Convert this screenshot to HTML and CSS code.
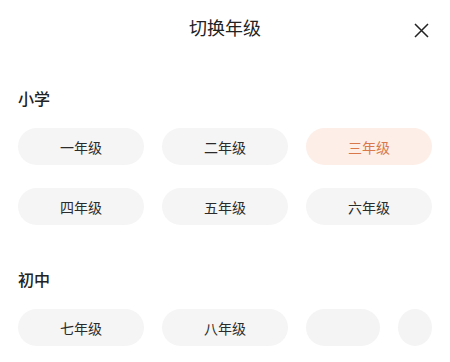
FILE: index.html
```html
<!DOCTYPE html>
<html>
<head>
<meta name="viewport" content="width=device-width, initial-scale=1">
<link rel="stylesheet" href="styles.css">
</head>
<body>

<div class="header">
  <h2 class="title">切换年级</h2>
  <span class="close">
    <svg width="15" height="15" viewBox="0 0 15 15"><path d="M1 1L14 14M14 1L1 14" stroke="#222" stroke-width="1.5" fill="none"/></svg>
  </span>
</div>

<div class="section">
  <div class="section-title first">小学</div>
  <div class="grid">
    <div class="pill">一年级</div>
    <div class="pill">二年级</div>
    <div class="pill active">三年级</div>
    <div class="pill">四年级</div>
    <div class="pill">五年级</div>
    <div class="pill">六年级</div>
  </div>
</div>

<div class="section">
  <div class="section-title">初中</div>
  <div class="grid">
    <div class="pill">七年级</div>
    <div class="pill">八年级</div>
    <div class="placeholder-cell">
      <div class="pill blank"></div>
      <div class="dot"></div>
    </div>
  </div>
</div>

</body>
</html>
```

FILE: styles.css
```css
* {
  box-sizing: border-box;
}

body {
  margin: 0;
  background: #fff;
  font-family: "Noto Sans CJK SC", "Noto Sans", sans-serif;
  color: #222;
}

.header {
  height: 54px;
  display: flex;
  align-items: center;
  justify-content: center;
  position: relative;
}

.title {
  margin: 0;
  font-size: 18px;
  font-weight: 400;
  line-height: 24px;
}

.close {
  position: absolute;
  right: 21px;
  top: 19px;
  width: 15px;
  height: 15px;
}

.section {
  padding: 0 18px;
}

.section-title {
  font-size: 16px;
  font-weight: 500;
  line-height: 22px;
  margin-top: 43px;
  margin-bottom: 19px;
}

.section-title.first {
  margin-top: 33px;
}

.grid {
  display: grid;
  grid-template-columns: repeat(3, 126px);
  column-gap: 18px;
  row-gap: 23px;
}

.pill {
  height: 37px;
  border-radius: 19px;
  background: #f5f5f5;
  display: flex;
  align-items: center;
  justify-content: center;
  font-size: 14px;
  color: #2b2b2b;
}

.pill.active {
  background: #fdeee7;
  color: #d8784b;
}

.placeholder-cell {
  display: flex;
  gap: 18px;
}

.pill.blank {
  width: 74px;
  background: #f4f4f4;
}

.dot {
  width: 34px;
  height: 37px;
  border-radius: 50%;
  background: #f4f4f4;
}
```
